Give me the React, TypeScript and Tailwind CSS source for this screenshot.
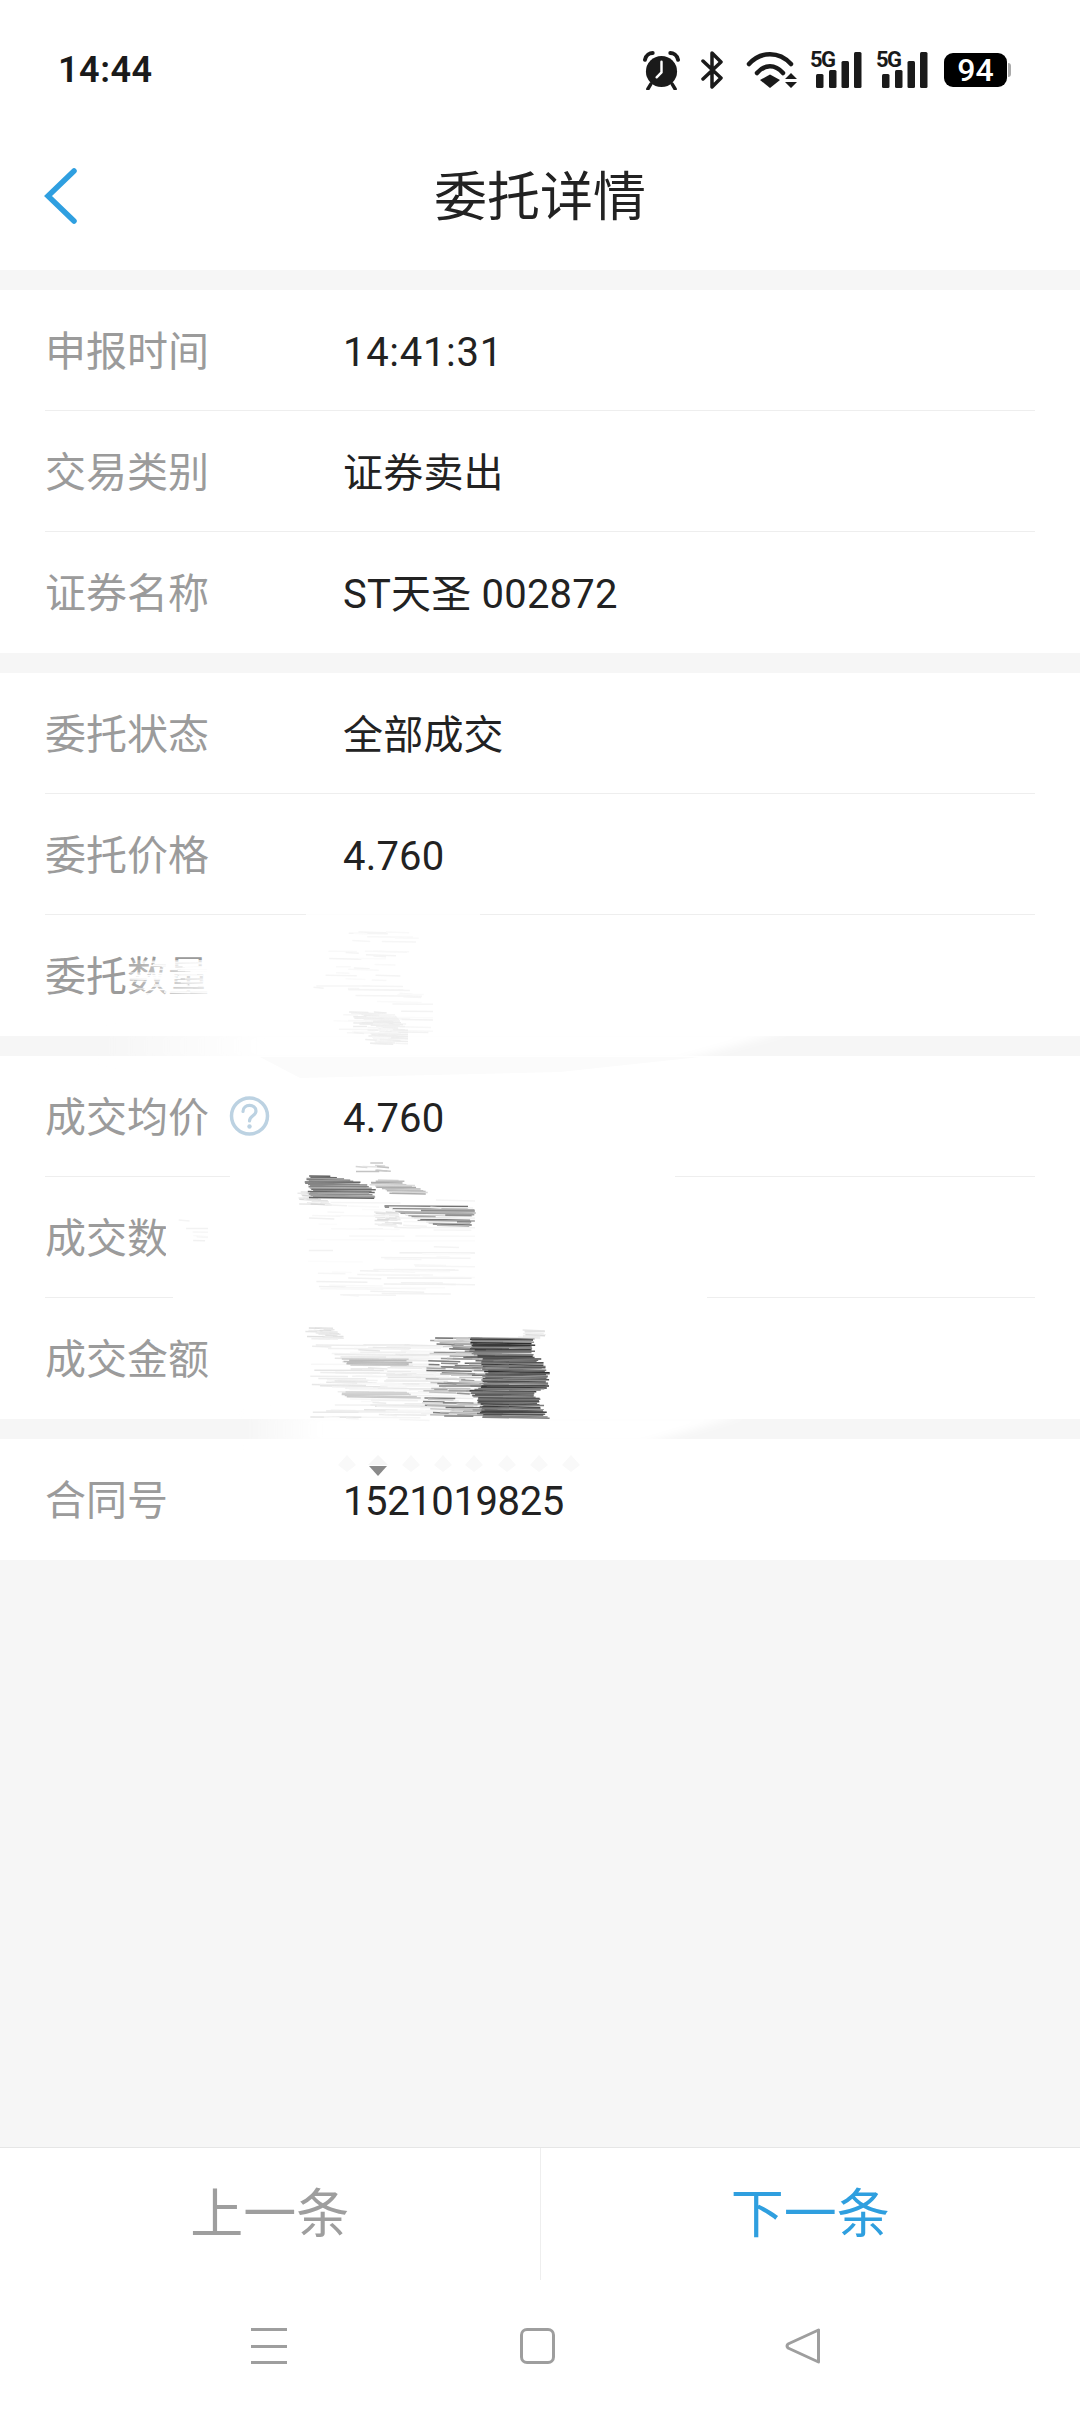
import React from "react";

const GROUPS = [
  [
    { label: "申报时间", value: "14:41:31", track: "tracking-[0.7px]" },
    { label: "交易类别", value: "证券卖出" },
    { label: "证券名称", value: "ST天圣 002872" },
  ],
  [
    { label: "委托状态", value: "全部成交" },
    { label: "委托价格", value: "4.760" },
    { label: "委托数量", value: "" },
  ],
  [
    { label: "成交均价", value: "4.760", help: true },
    { label: "成交数量", value: "" },
    { label: "成交金额", value: "" },
  ],
];

const AlarmIcon = () => (
  <svg width="37" height="39" viewBox="0 0 38 40" fill="none">
    <circle cx="19" cy="21" r="16" fill="#1a1a1a" />
    <path d="M2 9 C3 4 7 2 10 2" stroke="#1a1a1a" strokeWidth="4" strokeLinecap="round" />
    <path d="M36 9 C35 4 31 2 28 2" stroke="#1a1a1a" strokeWidth="4" strokeLinecap="round" />
    <path d="M8 34 L5 39 M30 34 L33 39" stroke="#1a1a1a" strokeWidth="3.5" strokeLinecap="round" />
    <path d="M19 11 V22 L14 27" stroke="#fff" strokeWidth="2.5" strokeLinecap="round" strokeLinejoin="round" />
  </svg>
);

const BluetoothIcon = () => (
  <svg width="22" height="38" viewBox="0 0 22 38" fill="none">
    <path d="M2 10 L20 27 L11 36 V2 L20 11 L2 28" stroke="#1a1a1a" strokeWidth="3.5" strokeLinecap="round" strokeLinejoin="round" />
  </svg>
);

const WifiIcon = () => (
  <svg width="52" height="38" viewBox="0 0 52 38" fill="none">
    <path d="M3 13 C15 0 33 0 45 13" stroke="#1a1a1a" strokeWidth="4.5" strokeLinecap="round" />
    <path d="M11 22 C19 13 29 13 37 22" stroke="#1a1a1a" strokeWidth="4.5" strokeLinecap="round" />
    <path d="M14 29 L24 23.5 L34 29 L24 37 Z" fill="#1a1a1a" />
    <path d="M39 28 L45 22 L51 28 Z M39 31 H51 L45 37 Z" fill="#1a1a1a" />
  </svg>
);

const Signal = () => (
  <div className="relative w-[52px] h-[38px]">
    <span className="absolute left-0 top-[-3px] text-[22px] leading-[24px] font-bold tracking-[-1.5px] text-[#1a1a1a]">
      5G
    </span>
    <svg className="absolute inset-0" width="52" height="38" viewBox="0 0 52 38" fill="#1a1a1a">
      <rect x="6" y="23" width="7.5" height="14" rx="1.5" />
      <rect x="19" y="19" width="7.5" height="18" rx="1.5" />
      <rect x="31.5" y="10" width="7.5" height="27" rx="1.5" />
      <rect x="44" y="1" width="7.5" height="36" rx="1.5" />
    </svg>
  </div>
);

const Battery = () => (
  <div className="flex items-center">
    <div className="w-[63px] h-[34px] rounded-[9px] bg-black flex items-center justify-center text-[32px] leading-none font-medium text-white">
      94
    </div>
    <div className="w-[3px] h-[14px] ml-px rounded-r-sm bg-[#aaaaaa]" />
  </div>
);

const HelpIcon = () => (
  <svg className="ml-[20px] -mt-[5px]" width="41" height="40" viewBox="0 0 41 40" fill="none">
    <circle cx="20.5" cy="20" r="18" stroke="#bcd2e2" strokeWidth="3.5" />
    <path d="M14 15.5 C14 7.5 27 7.5 27 15 C27 20 20.5 19.5 20.5 25" stroke="#bcd2e2" strokeWidth="3.2" strokeLinecap="round" />
    <circle cx="20.5" cy="30.5" r="2.2" fill="#bcd2e2" />
  </svg>
);

const Row = ({
  label,
  value,
  help,
  border,
  track = "tracking-[0.2px]",
}: {
  label: string;
  value: string;
  help?: boolean;
  border?: boolean;
  track?: string;
}) => (
  <div className={`mx-[45px] h-[121px] pt-[5px] flex items-center ${border ? "border-b border-[#eeeeee]" : ""}`}>
    <div className="w-[298px] flex items-center text-[41px] text-[#9b9b9b]">
      {label}
      {help && <HelpIcon />}
    </div>
    <div className={`text-[40px] text-[#222222] ${track}`}>{value}</div>
  </div>
);

// horizontal brush hairlines, profile = [y, left, right] points
const Brush = ({
  profile,
  tones,
  seed,
  density = 1,
  white,
}: {
  profile: number[][];
  tones: number[];
  seed: number;
  density?: number;
  white?: boolean;
}) => {
  let s = seed;
  const rnd = () => {
    s = (s * 16807) % 2147483647;
    return s / 2147483647;
  };
  const lines: React.ReactNode[] = [];
  const top = profile[0][0];
  const bottom = profile[profile.length - 1][0];
  for (let y = top; y <= bottom; y += 1.2) {
    let i = 0;
    while (i < profile.length - 2 && profile[i + 1][0] < y) i++;
    const [y0, l0, r0] = profile[i];
    const [y1, l1, r1] = profile[i + 1];
    const t = Math.min(1, (y - y0) / Math.max(1, y1 - y0));
    const left = l0 + (l1 - l0) * t;
    const right = r0 + (r1 - r0) * t;
    const pieces = density < 1 ? 3 : 1;
    for (let p = 0; p < pieces; p++) {
      if (rnd() > density) continue;
      const g = Math.round(tones[0] + rnd() * (tones[1] - tones[0]));
      const a = density < 1 ? left + rnd() * (right - left) * 0.8 : left + rnd() * 7 - 3.5;
      const b = density < 1 ? a + 10 + rnd() * (right - left) * 0.5 : right + rnd() * 7 - 3.5;
      lines.push(
        <line
          key={`${y}-${p}`}
          x1={a}
          x2={Math.min(b, right + 3)}
          y1={y}
          y2={y + rnd() * 1.2}
          stroke={white ? "#ffffff" : `rgb(${g},${g},${g})`}
          strokeWidth={1.5}
          strokeOpacity={white ? 0.5 + rnd() * 0.5 : 1}
        />
      );
    }
  }
  return <g>{lines}</g>;
};

// the hand-drawn blur somebody put over the quantity and amount figures
const Scribble = () => (
  <svg className="absolute inset-0 pointer-events-none" width="1080" height="2412" viewBox="0 0 1080 2412">
    <defs>
      <linearGradient id="fadeA" gradientUnits="userSpaceOnUse" x1="100" x2="260" y1="0" y2="0">
        <stop offset="0" stopColor="#fff" stopOpacity="0" />
        <stop offset="1" stopColor="#fff" />
      </linearGradient>
      <linearGradient id="fadeB" gradientUnits="userSpaceOnUse" x1="245" x2="320" y1="0" y2="0">
        <stop offset="0" stopColor="#fff" stopOpacity="0" />
        <stop offset="1" stopColor="#fff" />
      </linearGradient>
      <linearGradient id="fadeC" gradientUnits="userSpaceOnUse" x1="125" x2="205" y1="0" y2="0">
        <stop offset="0" stopColor="#fff" stopOpacity="0.1" />
        <stop offset="1" stopColor="#fff" stopOpacity="0.75" />
      </linearGradient>
      <filter id="soft" x="-5%" y="-50%" width="110%" height="200%">
        <feGaussianBlur stdDeviation="4" />
      </filter>
    </defs>

    {/* erased gaps and dividers */}
    <polygon points="100,1030 790,1030 675,1062 100,1062" fill="url(#fadeA)" filter="url(#soft)" />
    <polygon points="260,1057 700,1057 560,1072 300,1078" fill="#fbfbfb" />
    <polygon points="245,1414 745,1414 640,1445 245,1445" fill="url(#fadeB)" filter="url(#soft)" />
    <rect x="306" y="913" width="174" height="4" fill="#ffffff" fillOpacity="0.85" />
    <rect x="230" y="1175" width="445" height="4" fill="#ffffff" />
    <rect x="173" y="1296" width="534" height="4" fill="#ffffff" />

    {/* erased label characters */}
    <rect x="125" y="960" width="85" height="45" fill="url(#fadeC)" />
    <Brush profile={[[962, 125, 210], [1002, 125, 210]]} tones={[255, 255]} seed={71} density={0.5} white />
    <rect x="166" y="1218" width="48" height="50" fill="#ffffff" />
    <Brush profile={[[1220, 170, 205], [1258, 170, 205]]} tones={[240, 250]} seed={11} density={0.08} />

    {/* faint smear on the order quantity */}
    <Brush profile={[[932, 330, 420], [960, 320, 400], [1000, 310, 430], [1035, 330, 430]]} tones={[243, 252]} seed={5} density={0.22} />
    <Brush profile={[[1012, 345, 390], [1030, 350, 405], [1044, 370, 405]]} tones={[236, 248]} seed={9} density={0.9} />

    {/* deal quantity */}
    <Brush profile={[[1163, 350, 380], [1172, 355, 395]]} tones={[190, 235]} seed={17} density={0.35} />
    <Brush profile={[[1192, 295, 315], [1205, 295, 330]]} tones={[215, 240]} seed={19} density={0.6} />
    <Brush profile={[[1176, 310, 330], [1182, 308, 360], [1188, 310, 373], [1198, 312, 372]]} tones={[95, 165]} seed={23} />
    <Brush profile={[[1180, 375, 400], [1186, 372, 415], [1194, 395, 428]]} tones={[165, 225]} seed={29} />
    <Brush profile={[[1212, 372, 395], [1226, 372, 400]]} tones={[215, 240]} seed={37} density={0.6} />
    <Brush profile={[[1206, 385, 470], [1212, 400, 473], [1222, 425, 472], [1226, 440, 470]]} tones={[105, 190]} seed={31} />
    <Brush profile={[[1200, 305, 472], [1295, 305, 472]]} tones={[240, 252]} seed={41} density={0.25} />

    {/* deal amount */}
    <Brush profile={[[1328, 305, 330], [1340, 305, 345]]} tones={[222, 242]} seed={43} density={0.7} />
    <Brush profile={[[1345, 310, 440], [1420, 310, 490]]} tones={[228, 250]} seed={47} density={0.75} />
    <Brush profile={[[1359, 345, 410], [1366, 350, 410]]} tones={[170, 205]} seed={53} />
    <Brush profile={[[1392, 345, 410], [1398, 345, 420]]} tones={[180, 220]} seed={59} />
    <Brush profile={[[1338, 430, 500], [1400, 420, 500], [1418, 430, 500]]} tones={[105, 220]} seed={61} density={0.55} />
    <Brush
      profile={[[1338, 470, 533], [1352, 472, 532], [1358, 482, 538], [1372, 486, 547], [1386, 484, 546], [1392, 470, 535], [1402, 480, 540], [1418, 484, 547]]}
      tones={[45, 150]}
      seed={67}
    />
    <Brush profile={[[1330, 525, 545], [1338, 520, 540]]} tones={[215, 240]} seed={73} />

    {/* masked marker row above the contract number */}
    {[347, 411, 443, 474, 507, 539, 571].map((x) => (
      <path key={x} d={`M${x} 1455 L${x + 9} 1465 L${x} 1472 L${x - 9} 1465 Z`} fill="#f9f9f9" />
    ))}
    <path d="M378 1455 L388 1465 L368 1465 Z" fill="#f6f6f6" />
    <path d="M369 1466 H387 L378 1476 Z" fill="#8a8a8a" />
  </svg>
);

const App = () => {
  return (
    <div className="relative w-[1080px] h-[2412px] flex flex-col bg-white overflow-hidden font-['Roboto','Noto_Sans_CJK_SC',sans-serif]">
      <div className="h-[140px] flex items-center justify-between pl-[58px] pr-[69px]">
        <span className="text-[36px] font-semibold tracking-[0.5px] text-[#1a1a1a]">14:44</span>
        <div className="flex items-center">
          <AlarmIcon />
          <div className="ml-[21px]"><BluetoothIcon /></div>
          <div className="ml-[23px]"><WifiIcon /></div>
          <div className="ml-[12px]"><Signal /></div>
          <div className="ml-[14px]"><Signal /></div>
          <div className="ml-[16px]"><Battery /></div>
        </div>
      </div>

      <div className="relative h-[130px] pb-[13px] flex items-center justify-center">
        <svg className="absolute left-[42px] top-[27px]" width="38" height="58" viewBox="0 0 38 58" fill="none">
          <path d="M32 4 L6 29 L32 54" stroke="#2f9fe0" strokeWidth="5.5" strokeLinecap="round" />
        </svg>
        <h1 className="text-[53px] font-normal text-[#222222]">委托详情</h1>
      </div>

      <div className="flex-1 flex flex-col bg-[#f6f6f6]">
        <div className="flex flex-col gap-[20px] pt-[20px]">
          {GROUPS.map((rows, i) => (
            <div key={i} className="bg-white">
              {rows.map((row, j) => (
                <Row key={row.label} {...row} border={j < rows.length - 1} />
              ))}
            </div>
          ))}
          <div className="bg-white">
            <Row label="合同号" value="1521019825" track="tracking-[-0.4px]" />
          </div>
        </div>
      </div>

      <div className="h-[133px] flex border-t border-[#e6e6e6] bg-white text-[53px]">
        <div className="flex-1 flex items-center justify-center pt-[4px] border-r border-[#eeeeee] text-[#9e9e9e]">上一条</div>
        <div className="flex-1 flex items-center justify-center pt-[4px] text-[#2f9fdf]">下一条</div>
      </div>

      <div className="h-[132px] flex items-start bg-white pl-[251px] pt-[48px]">
        <div className="w-[36px] h-[36px] flex flex-col justify-between">
          <div className="h-[3px] bg-[#9e9e9e]" />
          <div className="h-[3px] bg-[#9e9e9e]" />
          <div className="h-[3px] bg-[#9e9e9e]" />
        </div>
        <div className="ml-[233px] w-[35px] h-[36px] rounded-[7px] border-[3px] border-[#9e9e9e]" />
        <svg className="ml-[230px]" width="36" height="36" viewBox="0 0 36 36" fill="none">
          <path d="M33.5 2 V34 L3 20 Q1 18 3 16 Z" stroke="#9e9e9e" strokeWidth="3" strokeLinejoin="round" />
        </svg>
      </div>

      <Scribble />
    </div>
  );
};

export default App;
